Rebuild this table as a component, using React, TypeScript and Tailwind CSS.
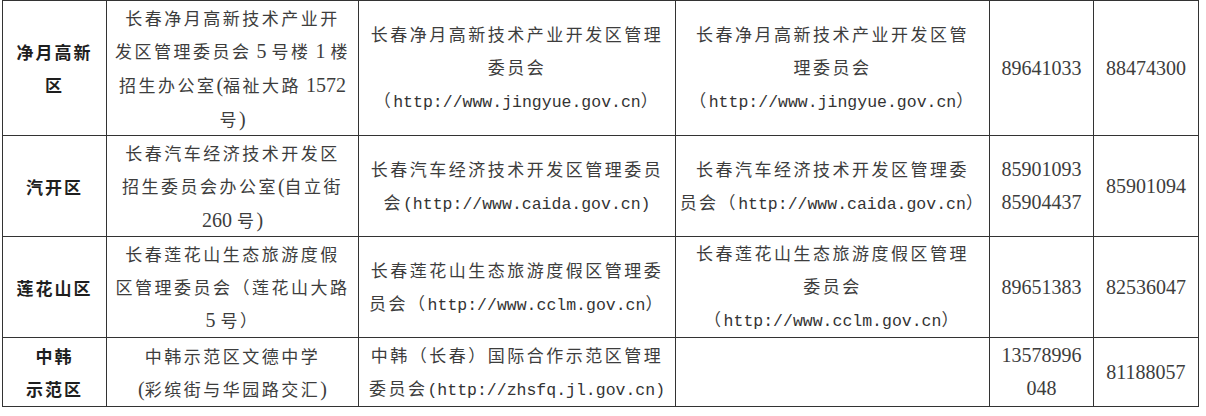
import React from "react";

const U = ({ children }: { children: React.ReactNode }) => (
  <span className="font-['Liberation_Mono',monospace] text-[16.5px] tracking-[0px] text-[#333]">{children}</span>
);
const N = ({ children }: { children: React.ReactNode }) => (
  <span className="font-['Liberation_Serif',serif] text-[20px] tracking-[0px]">{children}</span>
);

const Cell = ({ children, bold }: { children?: React.ReactNode; bold?: boolean }) => (
  <div
    className={
      bold
        ? "flex flex-col items-center justify-center text-center border-r border-b border-[#333] font-['Noto_Sans_CJK_SC',sans-serif] font-bold text-[17px] tracking-[2px] leading-[33px] text-[#1e1e1e] whitespace-nowrap"
        : "flex flex-col items-center justify-center text-center border-r border-b border-[#333] font-['Noto_Sans_CJK_SC',sans-serif] text-[17px] tracking-[2.5px] leading-[33px] text-[#3d3d3d] whitespace-nowrap"
    }
  >
    {children}
  </div>
);

const NumCell = ({ lines }: { lines: string[] }) => (
  <div className="flex flex-col items-center justify-center text-center border-r border-b border-[#333] font-['Liberation_Serif',serif] text-[20px] leading-[33px] text-[#3d3d3d] whitespace-nowrap">
    {lines.map((l) => (
      <div key={l}>{l}</div>
    ))}
  </div>
);

export default function App() {
  return (
    <div className="w-[1206px] h-[416px] bg-white overflow-hidden">
      <div className="ml-[2px] w-[1197px] grid grid-cols-[104px_252px_317px_314px_104px_105px] grid-rows-[135px_101px_101px_69px] border-l border-t border-[#333]">
        {/* Row 1 */}
        <Cell bold>
          <div>净月高新</div>
          <div>区</div>
        </Cell>
        <Cell>
          <div>长春净月高新技术产业开</div>
          <div>
            发区管理委员会<N> 5 </N>号楼<N> 1 </N>楼
          </div>
          <div>
            招生办公室<N>(</N>福祉大路<N> 1572</N>
          </div>
          <div>
            号<N>)</N>
          </div>
        </Cell>
        <Cell>
          <div>长春净月高新技术产业开发区管理</div>
          <div>委员会</div>
          <div>
            （<U>http://www.jingyue.gov.cn</U>）
          </div>
        </Cell>
        <Cell>
          <div>长春净月高新技术产业开发区管</div>
          <div>理委员会</div>
          <div>
            （<U>http://www.jingyue.gov.cn</U>）
          </div>
        </Cell>
        <NumCell lines={["89641033"]} />
        <NumCell lines={["88474300"]} />

        {/* Row 2 */}
        <Cell bold>
          <div>汽开区</div>
        </Cell>
        <Cell>
          <div>长春汽车经济技术开发区</div>
          <div>
            招生委员会办公室<N>(</N>自立街
          </div>
          <div>
            <N>260 </N>号<N>)</N>
          </div>
        </Cell>
        <Cell>
          <div>长春汽车经济技术开发区管理委员</div>
          <div>
            会<U>(http://www.caida.gov.cn)</U>
          </div>
        </Cell>
        <Cell>
          <div>长春汽车经济技术开发区管理委</div>
          <div>
            员会（<U>http://www.caida.gov.cn</U>）
          </div>
        </Cell>
        <NumCell lines={["85901093", "85904437"]} />
        <NumCell lines={["85901094"]} />

        {/* Row 3 */}
        <Cell bold>
          <div>莲花山区</div>
        </Cell>
        <Cell>
          <div>长春莲花山生态旅游度假</div>
          <div>区管理委员会（莲花山大路</div>
          <div>
            <N>5 </N>号）
          </div>
        </Cell>
        <Cell>
          <div>长春莲花山生态旅游度假区管理委</div>
          <div>
            员会（<U>http://www.cclm.gov.cn</U>）
          </div>
        </Cell>
        <Cell>
          <div>长春莲花山生态旅游度假区管理</div>
          <div>委员会</div>
          <div>
            （<U>http://www.cclm.gov.cn</U>）
          </div>
        </Cell>
        <NumCell lines={["89651383"]} />
        <NumCell lines={["82536047"]} />

        {/* Row 4 */}
        <Cell bold>
          <div>中韩</div>
          <div>示范区</div>
        </Cell>
        <Cell>
          <div>中韩示范区文德中学</div>
          <div>
            <N>(</N>彩缤街与华园路交汇<N>)</N>
          </div>
        </Cell>
        <Cell>
          <div>中韩（长春）国际合作示范区管理</div>
          <div>
            委员会<U>(http://zhsfq.jl.gov.cn)</U>
          </div>
        </Cell>
        <Cell />
        <NumCell lines={["13578996", "048"]} />
        <NumCell lines={["81188057"]} />
      </div>
    </div>
  );
}
